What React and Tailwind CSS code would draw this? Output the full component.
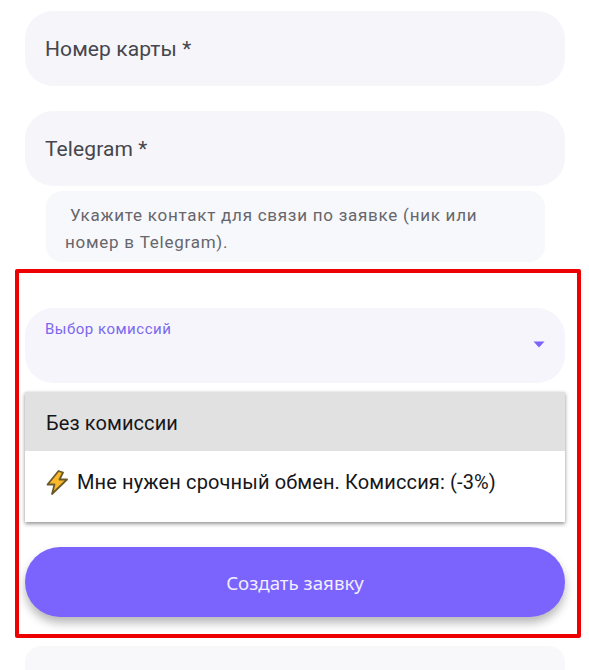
const font = "font-['Roboto','Liberation_Sans',sans-serif]"

function Field({ label }) {
  return (
    <div className="flex h-[75px] items-center rounded-[28px] bg-[#f5f5fa] px-[20px] pt-[3px] text-[21px] tracking-[0.1px] text-[#46464c]">
      {label}
    </div>
  )
}

export default function App() {
  return (
    <div className={`${font} h-[670px] w-[589px] overflow-hidden bg-white pt-[11px]`}>
      <div className="flex flex-col pl-[25px] pr-[24px]">
        <Field label="Номер карты *" />
        <div className="h-[25px]" />
        <Field label="Telegram *" />
        <div className="ml-[21px] mr-[20px] mt-[5px] h-[71px] rounded-[16px] bg-[#f7f8fb] px-[19px] py-[11px] text-[17px] leading-[27px] tracking-[0.74px] text-[#66666c]">
          <span className="pl-[5px]">Укажите контакт для связи по заявке (ник или</span>
          <br />
          номер в Telegram).
        </div>
      </div>

      {/* Red highlight frame */}
      <div className="ml-[15px] mt-[7px] h-[369px] w-[566px] rounded-[2px] border-[4px] border-[#ee0000] px-[6px] pt-[35px]">
        <div className="relative flex h-[75px] w-[540px] rounded-[28px] bg-[#f6f5fc] px-[20px] pt-[13px]">
          <span className="text-[15px] leading-[16px] tracking-[0.5px] text-[#7b68ee]">Выбор комиссий</span>
          <svg className="absolute right-[20px] top-[33px]" width="12" height="7" viewBox="0 0 12 7">
            <path d="M0.5 0.5 H11.5 L6 6.5 Z" fill="#7b63fb" />
          </svg>
        </div>

        <div className="mt-[9px] w-[540px] bg-white shadow-[0_2px_4px_rgba(0,0,0,0.4),0_0_3px_rgba(0,0,0,0.08)]">
          <div className="flex h-[59px] items-center bg-[#e1e1e1] pl-[21px] pt-[3px] text-[20px] tracking-[0.1px] text-[#16161a]">
            Без комиссии
          </div>
          <div className="flex h-[71px] items-center gap-[9px] pl-[21px] pb-[9px] text-[20px] tracking-[0.13px] text-[#16161a]">
            <svg width="22" height="25" viewBox="0 0 22 25" className="shrink-0">
              <path
                d="M12.5 1 L1.5 14.5 H8.5 L6 24 L21 9.5 H13.5 L17 2.5 Z"
                fill="#f9b92a"
                stroke="#6b5a2a"
                strokeWidth="1.8"
                strokeLinejoin="round"
              />
            </svg>
            Мне нужен срочный обмен. Комиссия: (-3%)
          </div>
        </div>

        <button className="mt-[25px] flex h-[70px] w-[540px] items-center justify-center rounded-[35px] bg-[#7b63fd] pt-[3px] font-['Noto_Sans',sans-serif] text-[18.7px] text-[#f1eeff] shadow-[0_6px_10px_rgba(0,0,0,0.28)]">
          Создать заявку
        </button>
      </div>

      <div className="ml-[25px] mt-[8px] h-[40px] w-[540px] rounded-t-[16px] bg-[#f8f8fb]" />
    </div>
  )
}
